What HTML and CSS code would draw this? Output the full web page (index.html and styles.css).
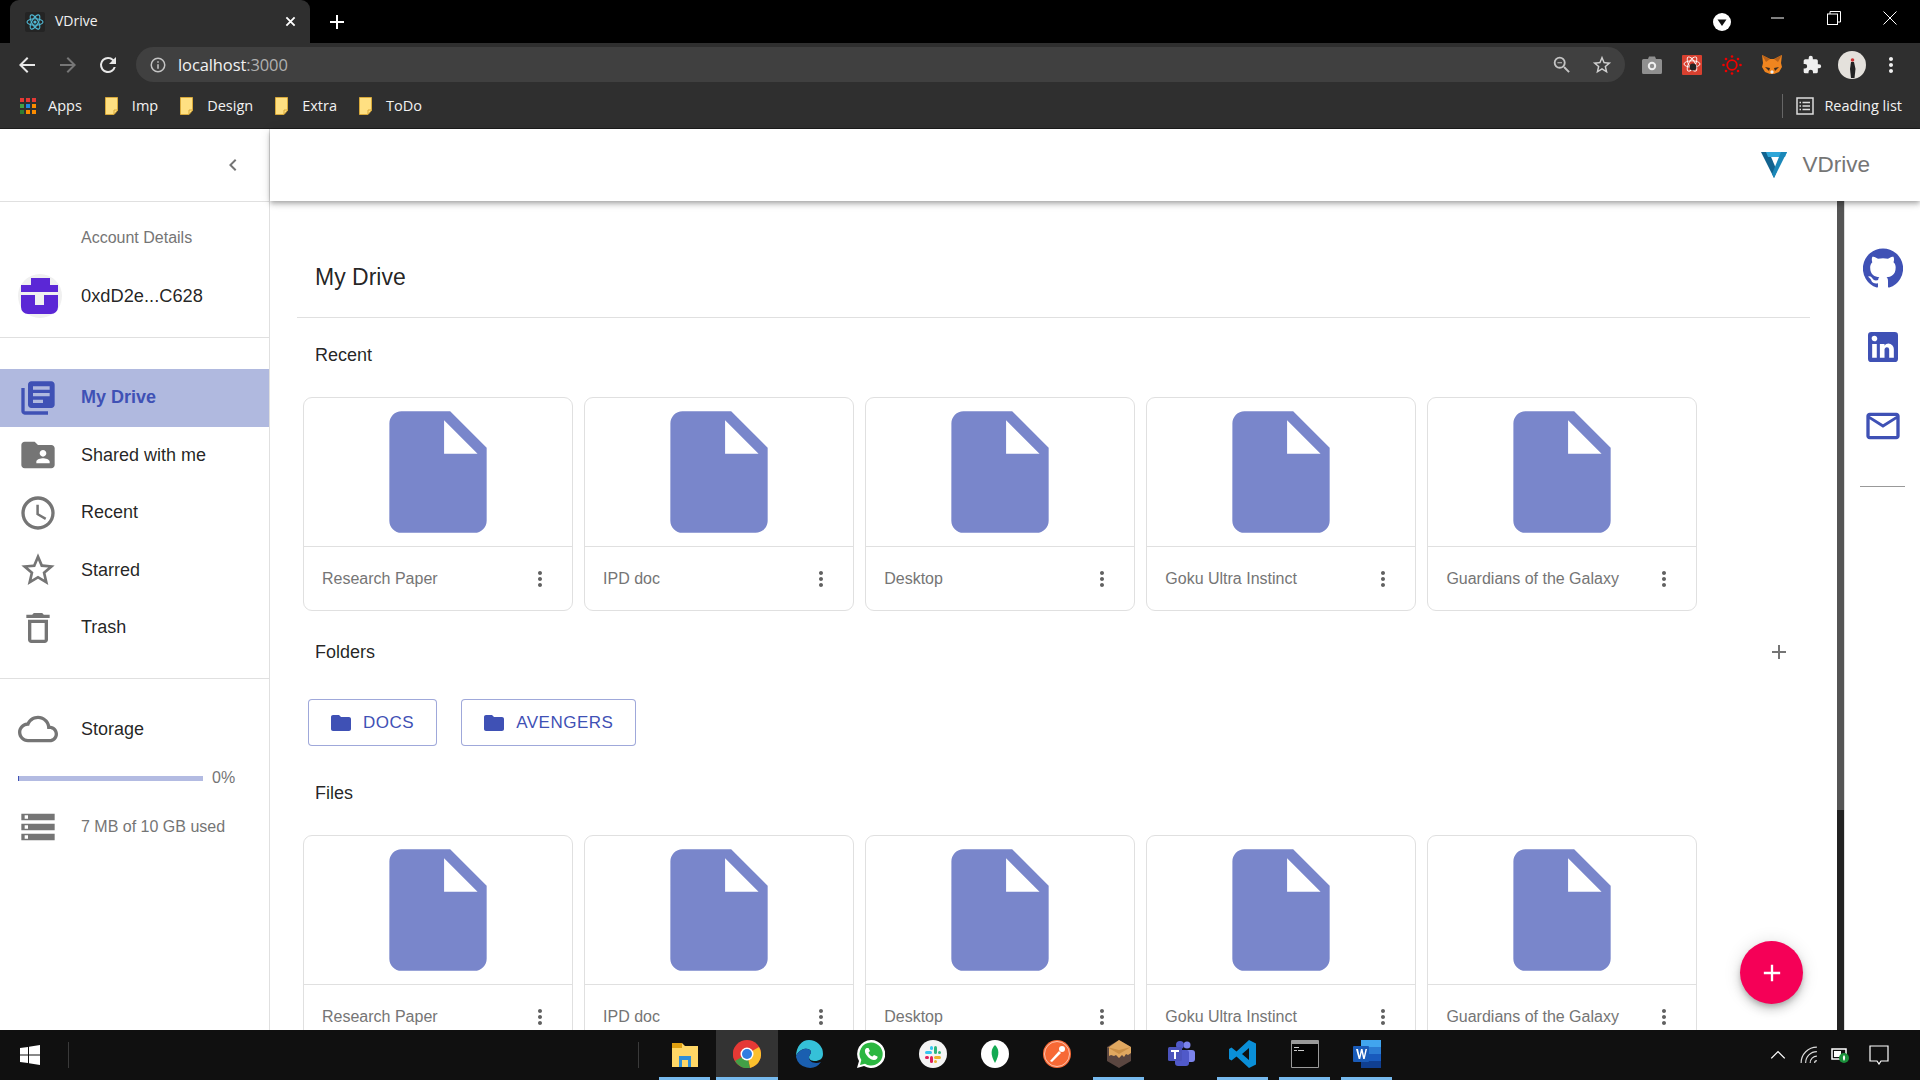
FILE: index.html
```html
<!DOCTYPE html>
<html lang="en">
<head>
    <meta charset="UTF-8">
    <title>VDrive</title>
    <link rel="stylesheet" href="styles.css">
</head>
<body>
    <!-- shared icons -->
    <svg class="sprite" xmlns="http://www.w3.org/2000/svg">
        <symbol id="i-file" viewBox="0 0 24 24"><path d="M6 2c-1.1 0-1.99.9-1.99 2L4 20c0 1.1.89 2 1.99 2H18c1.1 0 2-.9 2-2V8l-6-6H6zm7 7V3.5L18.5 9H13z"/></symbol>
        <symbol id="i-more" viewBox="0 0 24 24"><path d="M12 8c1.1 0 2-.9 2-2s-.9-2-2-2-2 .9-2 2 .9 2 2 2zm0 2c-1.1 0-2 .9-2 2s.9 2 2 2 2-.9 2-2-.9-2-2-2zm0 6c-1.1 0-2 .9-2 2s.9 2 2 2 2-.9 2-2-.9-2-2-2z"/></symbol>
        <symbol id="i-folder" viewBox="0 0 24 24"><path d="M10 4H4c-1.1 0-1.99.9-1.99 2L2 18c0 1.1.9 2 2 2h16c1.1 0 2-.9 2-2V8c0-1.1-.9-2-2-2h-8l-2-2z"/></symbol>
        <symbol id="i-bookmark" viewBox="0 0 14 18"><path d="M.5.5h12v13l-3.5 4H.5z" fill="#ffe082" stroke="#d8a93a"/><path d="M9 17v-4h4" fill="none" stroke="#d8a93a"/></symbol>
    </svg>

    <!-- browser chrome -->
    <header class="browser">
        <div class="tabstrip">
            <div class="tab">
                <svg class="favicon" viewBox="0 0 20 20" fill="none" stroke="#4fb8d4" stroke-width="1.1">
                    <rect width="20" height="20" rx="2" fill="#242424" stroke="none"/>
                    <ellipse cx="10" cy="10" rx="8" ry="3.2"/>
                    <ellipse cx="10" cy="10" rx="8" ry="3.2" transform="rotate(60 10 10)"/>
                    <ellipse cx="10" cy="10" rx="8" ry="3.2" transform="rotate(120 10 10)"/>
                    <circle cx="10" cy="10" r="1.6" fill="#4fb8d4" stroke="none"/>
                </svg>
                <span class="tab-title">VDrive</span>
                <svg class="tab-close" viewBox="0 0 12 12" stroke="#fff" stroke-width="2"><path d="M1.5 1.5l9 9M10.5 1.5l-9 9"/></svg>
            </div>
            <svg class="new-tab" viewBox="0 0 14 14" stroke="#fff" stroke-width="2"><path d="M7 0v14M0 7h14"/></svg>
            <div class="window-controls">
                <span class="profile-drop"><svg viewBox="0 0 18 18"><circle cx="9" cy="9" r="9" fill="#fff"/><path d="M4.5 6.5h9L9 13z" fill="#111"/></svg></span>
                <svg class="win-btn" viewBox="0 0 14 14" stroke="#fff" fill="none"><path d="M0 7h13"/></svg>
                <svg class="win-btn" viewBox="0 0 14 14" stroke="#fff" fill="none"><rect x=".5" y="3" width="10" height="10.5"/><path d="M3 3V.5h10.5V11H10.5"/></svg>
                <svg class="win-btn" viewBox="0 0 14 14" stroke="#fff" fill="none"><path d="M.5.5l13 13M13.5.5l-13 13"/></svg>
            </div>
        </div>

        <div class="toolbar">
            <svg class="tool" viewBox="0 0 24 24" fill="#e8e8e8"><path d="M20 11H7.83l5.59-5.59L12 4l-8 8 8 8 1.41-1.41L7.83 13H20v-2z"/></svg>
            <svg class="tool" viewBox="0 0 24 24" fill="#777"><path d="M12 4l-1.41 1.41L16.17 11H4v2h12.17l-5.58 5.59L12 20l8-8z"/></svg>
            <svg class="tool tool-reload" viewBox="0 0 24 24" fill="#e8e8e8"><path d="M17.65 6.35A7.95 7.95 0 0 0 12 4a8 8 0 1 0 7.73 10h-2.08A6 6 0 1 1 12 6c1.66 0 3.14.69 4.22 1.78L13 11h7V4l-2.35 2.35z"/></svg>
            <div class="omnibox">
                <svg class="omni-info" viewBox="0 0 24 24" fill="#c4c4c4"><path d="M11 7h2v2h-2zm0 4h2v6h-2zm1-9a10 10 0 1 0 0 20 10 10 0 0 0 0-20zm0 18a8 8 0 1 1 0-16 8 8 0 0 1 0 16z"/></svg>
                <span class="url">localhost<span class="url-port">:3000</span></span>
                <svg class="omni-zoom" viewBox="0 0 24 24" fill="#c4c4c4"><path d="M15.5 14h-.79l-.28-.27A6.47 6.47 0 0 0 16 9.5 6.5 6.5 0 1 0 9.5 16c1.61 0 3.09-.59 4.23-1.57l.27.28v.79l5 4.99L20.49 19l-4.99-5zm-6 0A4.5 4.5 0 1 1 14 9.5 4.49 4.49 0 0 1 9.5 14zM7 9h5v1H7z"/></svg>
                <svg class="omni-star" viewBox="0 0 24 24" fill="#d0d0d0"><path d="M22 9.24l-7.19-.62L12 2 9.19 8.63 2 9.24l5.46 4.73L5.82 21 12 17.27 18.18 21l-1.63-7.03L22 9.24zM12 15.4l-3.76 2.27 1-4.28-3.32-2.88 4.38-.38L12 6.1l1.71 4.04 4.38.38-3.32 2.88 1 4.28L12 15.4z"/></svg>
            </div>
            <div class="extensions">
                <svg class="ext" viewBox="0 0 20 18"><path d="M1.5 3H6l1-2.5h6L14 3h4.5A1.5 1.5 0 0 1 20 4.5v12a1.5 1.5 0 0 1-1.5 1.5h-17A1.5 1.5 0 0 1 0 16.5v-12A1.5 1.5 0 0 1 1.5 3z" fill="#8f8f8f"/><circle cx="10" cy="10" r="3.2" fill="none" stroke="#eee" stroke-width="2"/></svg>
                <svg class="ext" viewBox="0 0 20 20" fill="none"><rect width="20" height="20" rx="1" fill="#d8402f"/><g stroke="#fff" stroke-width=".9"><ellipse cx="10" cy="9" rx="8" ry="3.2"/><ellipse cx="10" cy="9" rx="8" ry="3.2" transform="rotate(60 10 9)"/><ellipse cx="10" cy="9" rx="8" ry="3.2" transform="rotate(120 10 9)"/></g><circle cx="11" cy="12" r="3.4" fill="#222"/></svg>
                <svg class="ext" viewBox="0 0 20 20" fill="#f00000"><circle cx="10" cy="10" r="4.8" fill="none" stroke="#f00000" stroke-width="1.8"/><circle cx="10" cy="1.5" r="1.3"/><circle cx="10" cy="18.5" r="1.3"/><circle cx="1.5" cy="10" r="1.3"/><circle cx="18.5" cy="10" r="1.3"/><circle cx="4" cy="4" r="1.3"/><circle cx="16" cy="4" r="1.3"/><circle cx="4" cy="16" r="1.3"/><circle cx="16" cy="16" r="1.3"/></svg>
                <svg class="ext" viewBox="0 0 20 20"><path d="M0 0l8 4h4l8-4-1 8 1 4-3 5-5 2H8l-5-2-3-5 1-4z" fill="#f0851f"/><path d="M3 12l5 1-1 3zm14 0l-5 1 1 3z" fill="#3a2a20"/><path d="M8 17l2-2 2 2-2 2z" fill="#eee"/><path d="M0 0l8 4-4 3zm20 0l-8 4 4 3z" fill="#b8621a"/></svg>
                <svg class="ext" viewBox="0 0 24 24" fill="#f0f0f0"><path d="M20.5 11H19V7a2 2 0 0 0-2-2h-4V3.5a2.5 2.5 0 0 0-5 0V5H4a2 2 0 0 0-2 2v3.8h1.5a2.7 2.7 0 0 1 0 5.4H2V20a2 2 0 0 0 2 2h3.8v-1.5a2.7 2.7 0 0 1 5.4 0V22H17a2 2 0 0 0 2-2v-4h1.500a2.500 2.500 0 0 0 0-5z"/></svg>
                <svg class="avatar-chip" viewBox="0 0 28 28"><circle cx="14" cy="14" r="14" fill="#e4e1dc"/><path d="M13 11h3l1.500 7-1 9h-3.500l-1-9z" fill="#222"/><circle cx="14.500" cy="9" r="1.800" fill="#c33"/></svg>
                <svg class="ext-more" viewBox="0 0 24 24" fill="#f0f0f0"><use href="#i-more"/></svg>
            </div>
        </div>

        <div class="bookmarks">
            <svg class="apps" viewBox="0 0 16 16">
                <g fill="#e53935"><rect width="4" height="4"/><rect x="6" width="4" height="4"/><rect x="12" width="4" height="4"/></g>
                <g><rect y="6" width="4" height="4" fill="#43a047"/><rect x="6" y="6" width="4" height="4" fill="#1e88e5"/><rect x="12" y="6" width="4" height="4" fill="#fb8c00"/></g>
                <g><rect y="12" width="4" height="4" fill="#2e7d32"/><rect x="6" y="12" width="4" height="4" fill="#fb8c00"/><rect x="12" y="12" width="4" height="4" fill="#fb8c00"/></g>
            </svg>
            <span class="mark mark-apps">Apps</span>
            <svg class="mark-icon"><use href="#i-bookmark"/></svg><span class="mark">Imp</span>
            <svg class="mark-icon"><use href="#i-bookmark"/></svg><span class="mark">Design</span>
            <svg class="mark-icon"><use href="#i-bookmark"/></svg><span class="mark">Extra</span>
            <svg class="mark-icon"><use href="#i-bookmark"/></svg><span class="mark">ToDo</span>
            <div class="reading">
                <svg class="reading-icon" viewBox="0 0 18 18" fill="none" stroke="#ddd"><rect x="1" y="1" width="16" height="16" stroke-width="1.5"/><path d="M6.5 5.5H14M6.5 9H14M6.5 12.5H14M3.5 5.5H5M3.5 9H5M3.5 12.5H5" stroke-width="1.3"/></svg>
                <span class="mark">Reading list</span>
            </div>
        </div>
    </header>

    <div class="app">
        <!-- left drawer -->
        <aside class="drawer">
            <div class="drawer-head">
                <svg class="chevron" viewBox="0 0 24 24" fill="#757575"><path d="M15.41 7.41L14 6l-6 6 6 6 1.41-1.41L10.83 12z"/></svg>
            </div>
            <div class="account">
                <div class="account-label">Account Details</div>
                <div class="account-row">
                    <svg class="identicon" viewBox="0 0 44 44">
                        <circle cx="22" cy="22" r="22" fill="#f0f0f0"/>
                        <path d="M13 4h19v7h8v7H3v-7h10z" fill="#5b27d6"/>
                        <path d="M3 21h14v10h9V21h14v12a7 7 0 0 1-7 7H10a7 7 0 0 1-7-7z" fill="#5b27d6"/>
                    </svg>
                    <span class="address">0xdD2e...C628</span>
                </div>
            </div>
            <nav class="nav">
                <a class="nav-item active"><svg class="nav-icon" viewBox="0 0 24 24"><path d="M4 6H2v14c0 1.1.9 2 2 2h14v-2H4V6zm16-4H8c-1.1 0-2 .9-2 2v12c0 1.1.9 2 2 2h12c1.1 0 2-.9 2-2V4c0-1.1-.9-2-2-2zm-1 9H9V9h10v2zm-4 4H9v-2h6v2zm4-8H9V5h10v2z"/></svg>My Drive</a>
                <a class="nav-item"><svg class="nav-icon" viewBox="0 0 24 24"><path d="M20 6h-8l-2-2H4c-1.1 0-1.99.9-1.99 2L2 18c0 1.1.9 2 2 2h16c1.1 0 2-.9 2-2V8c0-1.1-.9-2-2-2zm-5 3c1.1 0 2 .9 2 2s-.9 2-2 2-2-.9-2-2 .9-2 2-2zm4 8h-8v-1c0-1.33 2.67-2 4-2s4 .67 4 2v1z"/></svg>Shared with me</a>
                <a class="nav-item"><svg class="nav-icon" viewBox="0 0 24 24"><path d="M11.99 2C6.47 2 2 6.48 2 12s4.47 10 9.99 10C17.52 22 22 17.52 22 12S17.52 2 11.99 2zM12 20c-4.42 0-8-3.58-8-8s3.58-8 8-8 8 3.58 8 8-3.58 8-8 8zm.5-13H11v6l5.25 3.15.75-1.23-4.5-2.67z"/></svg>Recent</a>
                <a class="nav-item"><svg class="nav-icon" viewBox="0 0 24 24"><path d="M22 9.24l-7.19-.62L12 2 9.19 8.63 2 9.24l5.46 4.73L5.82 21 12 17.27 18.18 21l-1.63-7.03L22 9.24zM12 15.4l-3.76 2.27 1-4.28-3.32-2.88 4.38-.38L12 6.1l1.71 4.04 4.38.38-3.32 2.88 1 4.28L12 15.4z"/></svg>Starred</a>
                <a class="nav-item"><svg class="nav-icon" viewBox="0 0 24 24"><path d="M6 19c0 1.1.9 2 2 2h8c1.1 0 2-.9 2-2V7H6v12zM8 9h8v10H8V9zm7.5-5l-1-1h-5l-1 1H5v2h14V4z"/></svg>Trash</a>
            </nav>
            <div class="storage">
                <div class="storage-head"><svg class="nav-icon" viewBox="0 0 24 24"><path d="M19.35 10.04C18.67 6.59 15.64 4 12 4 9.11 4 6.6 5.64 5.35 8.04 2.34 8.36 0 10.91 0 14c0 3.31 2.69 6 6 6h13c2.76 0 5-2.24 5-5 0-2.64-2.05-4.78-4.65-4.96zM19 18H6c-2.21 0-4-1.79-4-4s1.79-4 4-4h.71C7.37 7.69 9.48 6 12 6c3.04 0 5.5 2.46 5.5 5.5v.5H19c1.66 0 3 1.34 3 3s-1.34 3-3 3z"/></svg>Storage</div>
                <div class="storage-bar"><div class="bar"><div class="bar-fill"></div></div><span class="muted">0%</span></div>
                <div class="storage-used"><svg class="nav-icon" viewBox="0 0 24 24"><path d="M2 20h20v-4H2v4zm2-3h2v2H4v-2zM2 4v4h20V4H2zm4 3H4V5h2v2zm-4 7h20v-4H2v4zm2-3h2v2H4v-2z"/></svg><span class="muted">7 MB of 10 GB used</span></div>
            </div>
        </aside>

        <div class="workspace">
            <div class="topbar">
                <svg class="logo" viewBox="0 0 26 26">
                    <path d="M0 0h8l8 19-3 7z" fill="#12638f"/>
                    <path d="M5 0h21l-2 5H7z" fill="#2ea6d8"/>
                    <path d="M26 0h-6l-9 22 2 4z" fill="#1b87b8"/>
                </svg>
                <span class="brand">VDrive</span>
            </div>
            <div class="body-row">
                <main class="main">
                    <h1 class="page-title">My Drive</h1>
                    <h2 class="section-title">Recent</h2>
                    <div class="cards">
                        <div class="card"><div class="card-thumb"><svg class="file-icon"><use href="#i-file"/></svg></div><div class="card-foot"><span>Research Paper</span><svg class="more"><use href="#i-more"/></svg></div></div>
                        <div class="card"><div class="card-thumb"><svg class="file-icon"><use href="#i-file"/></svg></div><div class="card-foot"><span>IPD doc</span><svg class="more"><use href="#i-more"/></svg></div></div>
                        <div class="card"><div class="card-thumb"><svg class="file-icon"><use href="#i-file"/></svg></div><div class="card-foot"><span>Desktop</span><svg class="more"><use href="#i-more"/></svg></div></div>
                        <div class="card"><div class="card-thumb"><svg class="file-icon"><use href="#i-file"/></svg></div><div class="card-foot"><span>Goku Ultra Instinct</span><svg class="more"><use href="#i-more"/></svg></div></div>
                        <div class="card"><div class="card-thumb"><svg class="file-icon"><use href="#i-file"/></svg></div><div class="card-foot"><span>Guardians of the Galaxy</span><svg class="more"><use href="#i-more"/></svg></div></div>
                    </div>
                    <div class="section-row">
                        <h2 class="section-title">Folders</h2>
                        <svg class="add-folder" viewBox="0 0 24 24" fill="#757575"><path d="M19 13h-6v6h-2v-6H5v-2h6V5h2v6h6v2z"/></svg>
                    </div>
                    <div class="folders">
                        <button class="folder-btn"><svg class="folder-icon"><use href="#i-folder"/></svg>DOCS</button>
                        <button class="folder-btn"><svg class="folder-icon"><use href="#i-folder"/></svg>AVENGERS</button>
                    </div>
                    <h2 class="section-title">Files</h2>
                    <div class="cards">
                        <div class="card"><div class="card-thumb"><svg class="file-icon"><use href="#i-file"/></svg></div><div class="card-foot"><span>Research Paper</span><svg class="more"><use href="#i-more"/></svg></div></div>
                        <div class="card"><div class="card-thumb"><svg class="file-icon"><use href="#i-file"/></svg></div><div class="card-foot"><span>IPD doc</span><svg class="more"><use href="#i-more"/></svg></div></div>
                        <div class="card"><div class="card-thumb"><svg class="file-icon"><use href="#i-file"/></svg></div><div class="card-foot"><span>Desktop</span><svg class="more"><use href="#i-more"/></svg></div></div>
                        <div class="card"><div class="card-thumb"><svg class="file-icon"><use href="#i-file"/></svg></div><div class="card-foot"><span>Goku Ultra Instinct</span><svg class="more"><use href="#i-more"/></svg></div></div>
                        <div class="card"><div class="card-thumb"><svg class="file-icon"><use href="#i-file"/></svg></div><div class="card-foot"><span>Guardians of the Galaxy</span><svg class="more"><use href="#i-more"/></svg></div></div>
                    </div>
                    <button class="fab"><svg viewBox="0 0 24 24" fill="#fff"><path d="M19 13h-6v6h-2v-6H5v-2h6V5h2v6h6v2z"/></svg></button>
                </main>
                <div class="scrollbar"><div class="scroll-thumb"></div></div>
                <aside class="social">
                    <svg class="social-icon" viewBox="0 0 24 24"><path d="M12 .3a12 12 0 0 0-3.8 23.4c.6.1.8-.3.8-.6v-2c-3.3.7-4-1.6-4-1.6-.6-1.4-1.4-1.8-1.4-1.8-1-.7.1-.7.1-.7 1.2 0 1.9 1.2 1.9 1.2 1 1.8 2.8 1.3 3.5 1 0-.8.4-1.3.7-1.6-2.7-.3-5.5-1.3-5.5-6 0-1.2.5-2.3 1.3-3.1-.2-.4-.6-1.6 0-3.2 0 0 1-.3 3.4 1.2a11.5 11.5 0 0 1 6 0c2.3-1.5 3.3-1.2 3.3-1.2.6 1.6.2 2.8 0 3.2.9.8 1.3 1.9 1.3 3.2 0 4.6-2.8 5.6-5.5 5.9.5.4.9 1 .9 2.2v3.3c0 .3.1.7.8.6A12 12 0 0 0 12 .3"/></svg>
                    <svg class="social-icon" viewBox="0 0 24 24"><path d="M19 3a2 2 0 0 1 2 2v14a2 2 0 0 1-2 2H5a2 2 0 0 1-2-2V5a2 2 0 0 1 2-2h14m-.5 15.5v-5.3a3.26 3.26 0 0 0-3.26-3.26c-.85 0-1.84.52-2.32 1.3v-1.11h-2.79v8.37h2.79v-4.93c0-.77.62-1.4 1.39-1.4a1.4 1.4 0 0 1 1.4 1.4v4.93h2.79M6.88 8.56a1.68 1.68 0 0 0 1.68-1.68c0-.93-.75-1.69-1.68-1.69a1.69 1.69 0 0 0-1.69 1.69c0 .93.76 1.68 1.69 1.68m1.39 9.94v-8.37H5.5v8.37h2.77z"/></svg>
                    <svg class="social-icon" viewBox="0 0 24 24"><path d="M20 4H4c-1.1 0-1.99.9-1.99 2L2 18c0 1.1.9 2 2 2h16c1.1 0 2-.9 2-2V6c0-1.1-.9-2-2-2zm0 14H4V8l8 5 8-5v10zm-8-7L4 6h16l-8 5z"/></svg>
                    <div class="social-rule"></div>
                </aside>
            </div>
        </div>
    </div>

    <!-- windows taskbar -->
    <footer class="taskbar">
        <svg class="start" viewBox="0 0 20 20" fill="#fff"><path d="M0 3l8-1.1V9.5H0zM9 1.7L20 0v9.5H9zM0 10.5h8v7.6L0 17zM9 10.5h11V20L9 18.3z"/></svg>
        <div class="task-sep"></div>
        <div class="task-apps">
            <div class="task-sep task-sep-apps"></div>
            <div class="task-app open"><svg viewBox="0 0 28 28"><path d="M1 3h10l3 3h13v21H1z" fill="#ffd766"/><path d="M1 3h10v5H1z" fill="#e0a010"/><path d="M8 16h12v11h-3v-7h-6v7H8z" fill="#2f8fd8"/></svg></div>
            <div class="task-app open current"><svg viewBox="0 0 28 28"><circle cx="14" cy="14" r="14" fill="#e53935"/><path d="M14 14L2 21A14 14 0 0 1 2 7z" fill="#e53935"/><path d="M14 14l12-7a14 14 0 0 1-9 21z" fill="#fbc02d"/><path d="M14 14l3 14A14 14 0 0 1 2 21z" fill="#43a047"/><circle cx="14" cy="14" r="6.5" fill="#fff"/><circle cx="14" cy="14" r="5" fill="#2f7de1"/></svg></div>
            <div class="task-app"><svg viewBox="0 0 28 28"><path d="M14 0a14 14 0 0 1 14 14c0 5-4 7-8 7-3 0-6-1-6-4 0-2 2-3 2-5s-3-4-7-3-8 5-8 8C1 6 7 0 14 0z" fill="#35c1d8"/><path d="M1 17c0-3 4-7 8-8s7 1 7 3-2 3-2 5c0 6 7 7 12 5a14 14 0 0 1-25-5z" fill="#1a5fb0"/></svg></div>
            <div class="task-app"><svg viewBox="0 0 28 28"><path d="M14 0a14 14 0 0 0-12 21L0 28l7-2A14 14 0 1 0 14 0z" fill="#fff"/><path d="M14 2.5a11.5 11.5 0 0 0-9.700 17.600L3 25l5-1.300A11.5 11.5 0 1 0 14 2.5z" fill="#2bb741"/><path d="M10 8c-1 0-2.5 1.5-2 4 .6 3 5 8 9 8 2.5 0 4-2 3.5-3.5L17 15l-1.5 1.5c-2-.5-3.5-2.5-4-4L13 11l-1.5-3z" fill="#fff"/></svg></div>
            <div class="task-app"><svg viewBox="0 0 28 28"><circle cx="14" cy="14" r="14" fill="#f4f4f4"/><rect x="6" y="11" width="7" height="3" rx="1.5" fill="#36c5f0"/><rect x="11" y="6" width="3" height="4" rx="1.5" fill="#36c5f0"/><rect x="15" y="6" width="3" height="8" rx="1.5" fill="#2eb67d"/><rect x="19" y="11" width="3" height="3" rx="1.5" fill="#2eb67d"/><rect x="15" y="16" width="7" height="3" rx="1.5" fill="#ecb22e"/><rect x="15" y="20" width="3" height="3" rx="1.5" fill="#ecb22e"/><rect x="11" y="16" width="3" height="7" rx="1.5" fill="#e01e5a"/><rect x="6" y="16" width="4" height="3" rx="1.5" fill="#e01e5a"/></svg></div>
            <div class="task-app"><svg viewBox="0 0 28 28"><circle cx="14" cy="14" r="14" fill="#fff"/><path d="M14 5c4 4 5 9 0 18-5-9-4-14 0-18z" fill="#13aa52"/></svg></div>
            <div class="task-app"><svg viewBox="0 0 28 28"><circle cx="14" cy="14" r="14" fill="#f76935"/><circle cx="14" cy="14" r="12.5" fill="none" stroke="#fff" stroke-opacity=".6"/><path d="M7 21l9-10 2 2-9 9z" fill="#fff"/><circle cx="19" cy="9" r="3" fill="#fff"/></svg></div>
            <div class="task-app open"><svg viewBox="0 0 28 28"><path d="M14 0l12 7v14l-12 7-12-7V7z" fill="#5a4640"/><path d="M14 0l12 7v6l-3 2-2-1-2 3-2-2-3 3-3-3-2 1-3-1-2 1V7z" fill="#e0a860"/><path d="M2 7l12 7 12-7-12 3z" fill="#c98f47"/></svg></div>
            <div class="task-app"><svg viewBox="0 0 28 28"><circle cx="20" cy="5" r="3.5" fill="#7b83eb"/><rect x="18" y="10" width="10" height="12" rx="3" fill="#7b83eb"/><circle cx="13" cy="5" r="4" fill="#5059c9"/><rect x="8" y="10" width="14" height="16" rx="3" fill="#5059c9"/><rect x="1" y="7" width="14" height="14" rx="1.5" fill="#4b53bc"/><path d="M4 10h8v2H9v7H7v-7H4z" fill="#fff"/></svg></div>
            <div class="task-app open"><svg viewBox="0 0 28 28"><path d="M20 0l7 3.5v21L20 28 7.5 16.5 2.5 20.5 0 19V9l2.5-1.5 5 4L20 0zm0 8l-7 6 7 6z" fill="#0a8fd8"/></svg></div>
            <div class="task-app open"><svg viewBox="0 0 28 28"><rect width="28" height="28" rx="1" fill="#9a9a9a"/><rect x="1" y="4" width="26" height="23" fill="#050505"/><path d="M3 7h5v1H3zm0 3h3v1H3zm4 0h6v1H7z" fill="#ccc"/></svg></div>
            <div class="task-app open"><svg viewBox="0 0 28 28"><path d="M8 0h20v7H8z" fill="#41a5ee"/><path d="M8 7h20v7H8z" fill="#2b7cd3"/><path d="M8 14h20v7H8z" fill="#185abd"/><path d="M8 21h20v7H8z" fill="#103f91"/><rect y="6" width="16" height="16" rx="1" fill="#1a5bb8"/><path d="M3 9h2l1.5 7L8 9h1.5l1.5 7 1.5-7H14l-2.3 10h-1.500L8.700 12.5 7.200 19H5.700z" fill="#fff"/></svg></div>
        </div>
        <div class="tray">
            <svg class="tray-icon" viewBox="0 0 16 16" fill="none" stroke="#fff" stroke-width="1.2"><path d="M2 11l6-6 6 6"/></svg>
            <svg class="tray-icon" viewBox="0 0 16 16" fill="none" stroke="#ddd"><path d="M1 15A14 14 0 0 1 15 1M5 15A10 10 0 0 1 15 5M9 15a6 6 0 0 1 6-6M13 15a2 2 0 0 1 2-2"/></svg>
            <svg class="tray-icon" viewBox="0 0 18 16"><rect x="1" y="2" width="14" height="10" fill="#111" stroke="#fff" stroke-width="1.5"/><rect x="3" y="4" width="7" height="6" fill="#fff"/><circle cx="13" cy="11" r="5" fill="#1a8f3a"/><path d="M13 8c1.5 1.5 1.5 4 0 6-1.5-2-1.5-4.5 0-6z" fill="#fff"/></svg>
            <svg class="tray-note" viewBox="0 0 20 20" fill="none" stroke="#fff" stroke-width="1.2"><path d="M1 1h18v15h-7l-2 3-2-3H1z"/></svg>
        </div>
    </footer>
</body>
</html>
```

FILE: styles.css
```css
* {
    box-sizing: border-box;
}
html, body {
    height: 100%;
}
body {
    margin: 0;
    height: 1080px;
    overflow: hidden;
    display: flex;
    flex-direction: column;
    font-family: "Liberation Sans", Arial, sans-serif;
    color: rgba(0, 0, 0, 0.87);
    background: #fff;
}
svg {
    display: block;
    flex: none;
}
.sprite {
    display: none;
}

/* browser chrome */
.browser {
    height: 129px;
    flex: none;
    background: #2f2f2f;
    color: #f2f2f2;
    font-family: "Open Sans", "Noto Sans", sans-serif;
}
.tabstrip {
    height: 43px;
    background: #000;
    display: flex;
    align-items: center;
}
.tab {
    width: 300px;
    height: 43px;
    margin-left: 10px;
    padding: 0 14px 0 15px;
    background: #2f2f2f;
    border-radius: 9px 9px 0 0;
    display: flex;
    align-items: center;
}
.favicon {
    width: 20px;
    height: 20px;
}
.tab-title {
    margin-left: 10px;
    margin-top: -2px;
    font-size: 14px;
    flex: 1;
}
.tab-close {
    width: 11px;
    height: 11px;
}
.new-tab {
    width: 14px;
    height: 14px;
    margin-left: 20px;
}
.window-controls {
    margin-left: auto;
    padding-right: 23px;
    display: flex;
    align-items: center;
}
.profile-drop {
    margin-right: -2px;
}
.profile-drop svg {
    width: 18px;
    height: 18px;
}
.win-btn {
    width: 14px;
    height: 14px;
    margin-left: 42px;
    margin-top: -7px;
}
.toolbar {
    height: 43px;
    display: flex;
    align-items: center;
    padding-left: 15px;
}
.tool {
    width: 24px;
    height: 24px;
    margin-right: 17px;
}
.tool-reload {
    margin-left: -1px;
    margin-right: 16px;
}
.omnibox {
    width: 1489px;
    height: 35px;
    background: #404040;
    border-radius: 18px;
    display: flex;
    align-items: center;
    padding: 0 12px 0 13px;
}
.omni-info {
    width: 18px;
    height: 18px;
}
.url {
    margin-left: 11px;
    font-size: 16.5px;
    letter-spacing: -0.1px;
}
.url-port {
    color: #b0b0b0;
}
.omni-zoom {
    width: 22px;
    height: 22px;
    margin-left: auto;
}
.omni-star {
    width: 22px;
    height: 22px;
    margin-left: 18px;
}
.extensions {
    display: flex;
    align-items: center;
    margin-left: 17px;
}
.ext {
    width: 20px;
    height: 20px;
    margin-right: 20px;
}
.avatar-chip {
    width: 28px;
    height: 28px;
    margin-left: -4px;
}
.ext-more {
    width: 24px;
    height: 24px;
    margin-left: 13px;
}
.bookmarks {
    height: 43px;
    display: flex;
    align-items: center;
    padding-left: 20px;
    padding-bottom: 3px;
    border-bottom: 1px solid #1d1d1d;
}
.apps {
    width: 16px;
    height: 16px;
}
.mark {
    font-size: 14.5px;
    margin-left: 13px;
    margin-right: 22px;
}
.mark-apps {
    margin-left: 12px;
    margin-right: 23px;
}
.mark-icon {
    width: 14px;
    height: 18px;
}
.reading {
    margin-left: auto;
    height: 24px;
    display: flex;
    align-items: center;
    border-left: 1px solid #666;
    padding-left: 13px;
}
.reading-icon {
    width: 18px;
    height: 18px;
}
.reading .mark {
    margin-left: 10px;
    margin-right: 18px;
}

/* app shell */
.app {
    flex: 1;
    min-height: 0;
    display: flex;
}
.drawer {
    width: 270px;
    flex: none;
    border-right: 1px solid #e0e0e0;
    display: flex;
    flex-direction: column;
}
.drawer-head {
    height: 73px;
    display: flex;
    align-items: center;
    justify-content: flex-end;
    padding-right: 24px;
    border-bottom: 1px solid #e0e0e0;
}
.chevron {
    width: 24px;
    height: 24px;
}
.account {
    height: 136px;
    padding-top: 26px;
    border-bottom: 1px solid #e0e0e0;
}
.account-label {
    padding-left: 81px;
    font-size: 16px;
    line-height: 20px;
    color: #757575;
}
.account-row {
    display: flex;
    align-items: center;
    margin-top: 26px;
    padding-left: 18px;
}
.identicon {
    width: 44px;
    height: 44px;
}
.address {
    margin-left: 19px;
    font-size: 18.3px;
}
.nav {
    padding: 31px 0 0;
    height: 341px;
    border-bottom: 1px solid #e0e0e0;
}
.nav-item {
    height: 57.5px;
    display: flex;
    align-items: center;
    padding-left: 18px;
    font-size: 18px;
}
.nav-icon {
    width: 40px;
    height: 40px;
    margin-right: 23px;
    fill: #757575;
}
.nav-item.active {
    background: #b0b9df;
    color: #3f51b5;
    font-weight: 700;
}
.active .nav-icon {
    fill: #3f51b5;
}
.storage {
    padding-top: 30px;
}
.storage-head {
    display: flex;
    align-items: center;
    padding-left: 18px;
    font-size: 18px;
}
.storage-bar {
    display: flex;
    align-items: center;
    padding-left: 18px;
    margin-top: 19px;
    height: 20px;
}
.bar {
    width: 185px;
    height: 5px;
    background: #b3bbe2;
}
.bar-fill {
    width: 1px;
    height: 100%;
    background: #3f51b5;
}
.muted {
    color: #757575;
    font-size: 16px;
}
.storage-bar .muted {
    margin-left: 9px;
}
.storage-used {
    display: flex;
    align-items: center;
    padding-left: 18px;
    margin-top: 19px;
}
.workspace {
    flex: 1;
    min-width: 0;
    display: flex;
    flex-direction: column;
}
.topbar {
    height: 72px;
    flex: none;
    position: relative;
    display: flex;
    align-items: center;
    justify-content: flex-end;
    padding-right: 50px;
    background: #fff;
    box-shadow: 0 2px 4px -1px rgba(0, 0, 0, 0.2), 0 4px 5px rgba(0, 0, 0, 0.14), 0 1px 10px rgba(0, 0, 0, 0.12);
}
.logo {
    width: 26px;
    height: 26px;
}
.brand {
    margin-left: 15px;
    font-size: 22.5px;
    color: #757575;
}
.body-row {
    flex: 1;
    min-height: 0;
    display: flex;
}

/* main content */
.main {
    flex: 1;
    min-width: 0;
    overflow: hidden;
    position: relative;
    padding: 0 27px;
}
.page-title {
    margin: 0;
    height: 117px;
    padding: 60px 0 0 18px;
    font-size: 23px;
    line-height: 32px;
    font-weight: 400;
    border-bottom: 1px solid #e0e0e0;
}
.section-title {
    margin: 0;
    padding-left: 18px;
    font-size: 18px;
    line-height: 24px;
    font-weight: 400;
}
.main > .section-title:first-of-type {
    margin-top: 25px;
}
.cards {
    display: flex;
    gap: 11.1px;
    padding-left: 6px;
    margin-top: 30px;
}
.card {
    width: 270px;
    height: 214px;
    flex: none;
    border: 1px solid #e0e0e0;
    border-radius: 9px;
    background: #fff;
}
.card-thumb {
    height: 149px;
    display: flex;
    justify-content: center;
    align-items: center;
    border-bottom: 1px solid #e0e0e0;
}
.file-icon {
    width: 146px;
    height: 146px;
    fill: #7986cb;
}
.card-foot {
    height: 63px;
    display: flex;
    align-items: center;
    justify-content: space-between;
    padding: 0 20px 0 18px;
    font-size: 16px;
    color: #757575;
}
.more {
    width: 24px;
    height: 24px;
    fill: #616161;
}
.section-row {
    display: flex;
    align-items: center;
    justify-content: space-between;
    margin-top: 29px;
    padding-right: 19px;
}
.add-folder {
    width: 24px;
    height: 24px;
}
.folders {
    display: flex;
    gap: 24px;
    padding-left: 11px;
    margin-top: 35px;
    margin-bottom: 35px;
}
.folder-btn {
    height: 47px;
    padding: 0 22px 0 20px;
    display: flex;
    align-items: center;
    background: #fff;
    border: 1px solid rgba(63, 81, 181, 0.5);
    border-radius: 4px;
    font-family: inherit;
    font-size: 17px;
    letter-spacing: 0.5px;
    color: #3f51b5;
}
.folder-icon {
    width: 24px;
    height: 24px;
    margin-right: 10px;
    fill: #3f51b5;
}
.fab {
    position: absolute;
    right: 34px;
    top: 740px;
    width: 63px;
    height: 63px;
    padding: 0;
    border: 0;
    border-radius: 50%;
    background: #f50057;
    display: flex;
    align-items: center;
    justify-content: center;
    box-shadow: 0 3px 5px -1px rgba(0, 0, 0, 0.2), 0 6px 10px rgba(0, 0, 0, 0.14), 0 1px 18px rgba(0, 0, 0, 0.12);
}
.fab svg {
    width: 28px;
    height: 28px;
}
.scrollbar {
    width: 7px;
    flex: none;
    background: #222;
}
.scroll-thumb {
    height: 609px;
    background: #555;
}
.social {
    width: 76px;
    flex: none;
    display: flex;
    flex-direction: column;
    align-items: center;
    padding-top: 47px;
    border-left: 1px solid #ddd;
}
.social-icon {
    width: 40px;
    height: 40px;
    margin-bottom: 39px;
    fill: #3f51b5;
}
.social-rule {
    width: 45px;
    height: 1px;
    margin-top: 1px;
    background: #999;
}

/* taskbar */
.taskbar {
    height: 50px;
    flex: none;
    background: #101010;
    display: flex;
    align-items: center;
    position: relative;
}
.start {
    width: 20px;
    height: 20px;
    margin-left: 20px;
}
.task-sep {
    width: 1px;
    height: 26px;
    margin-left: 28px;
    background: #3a3a3a;
}
.task-apps {
    display: flex;
    align-items: center;
    margin-left: 569px;
}
.task-sep-apps {
    margin: 0 15px 0 0;
}
.task-app {
    width: 62px;
    height: 50px;
    display: flex;
    align-items: center;
    justify-content: center;
    position: relative;
}
.task-app svg {
    width: 28px;
    height: 28px;
    margin-top: -2px;
}
.task-app.open::after {
    content: "";
    position: absolute;
    left: 5px;
    right: 6px;
    bottom: 0;
    height: 3px;
    background: #76b9ed;
}
.task-app.current {
    background: #333;
}
.task-app.current::after {
    left: 0;
    right: 0;
}
.tray {
    margin-left: auto;
    display: flex;
    align-items: center;
    padding-right: 31px;
}
.tray-icon {
    width: 18px;
    height: 18px;
    margin-right: 13px;
}
.tray-note {
    width: 20px;
    height: 20px;
    margin-left: 7px;
}
```
